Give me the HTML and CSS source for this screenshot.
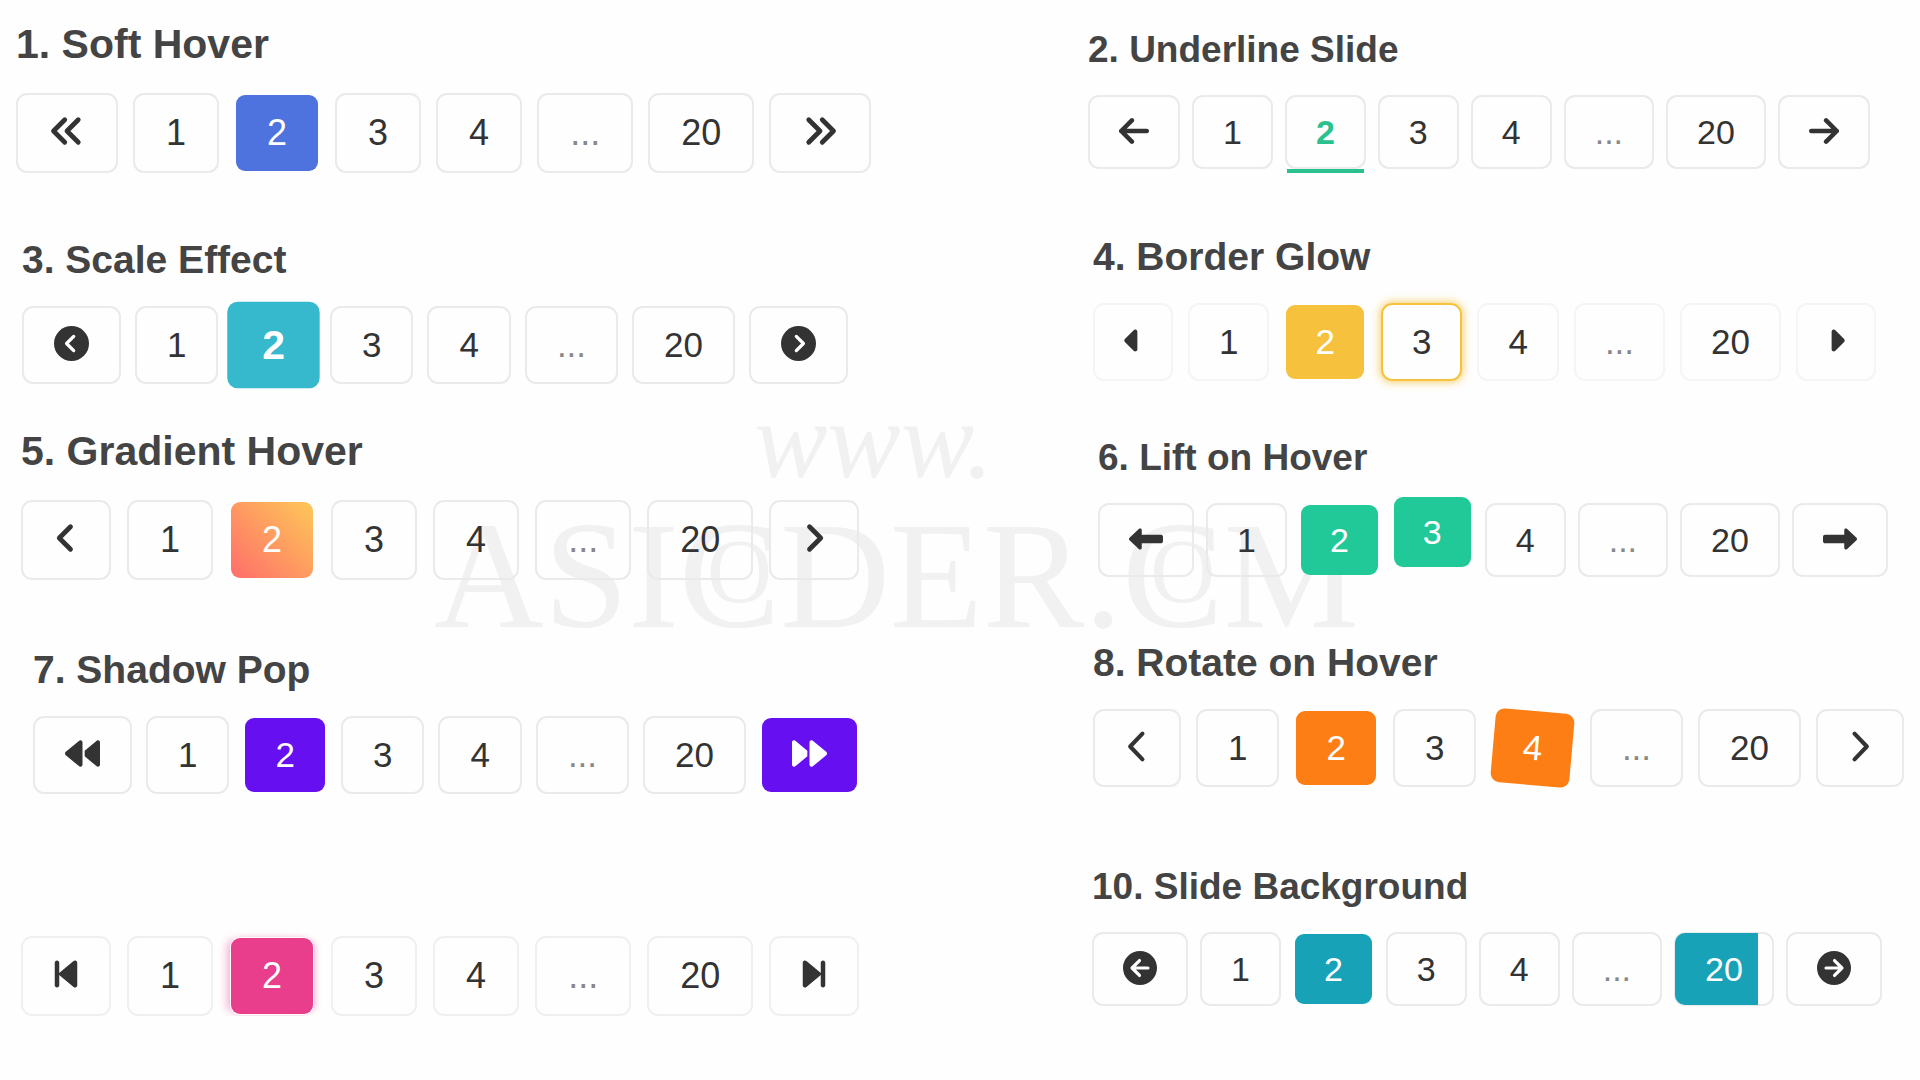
FILE: index.html
```
<!DOCTYPE html>
<html lang="en">
<head>
    <meta charset="UTF-8">
    <meta name="viewport" content="width=device-width, initial-scale=1.0">
    <title>Pagination Hover Effects</title>
    <link rel="stylesheet" href="styles.css">
</head>
<body>
    <!-- Icon set, "next" icons are the same shapes flipped -->
    <svg class="sprite" aria-hidden="true">
        <symbol id="angles" viewBox="0 0 512 512">
            <path class="line" d="M224 96 64 256l160 160M416 96 256 256l160 160"/>
        </symbol>
        <symbol id="arrow" viewBox="0 0 448 512">
            <path class="line" d="M192 96 32 256l160 160M32 256h384"/>
        </symbol>
        <symbol id="circle-chevron" viewBox="0 0 512 512">
            <circle cx="256" cy="256" r="256"/>
            <path class="cut" d="M288 152 184 256l104 104"/>
        </symbol>
        <symbol id="caret" viewBox="0 0 256 512">
            <path d="M9.4 278.6c-12.5-12.5-12.5-32.8 0-45.3l128-128c9.2-9.2 22.9-11.9 34.9-6.9s19.8 16.6 19.8 29.6v256c0 12.9-7.8 24.6-19.8 29.6s-25.7 2.2-34.9-6.9l-128-128z"/>
        </symbol>
        <symbol id="angle" viewBox="0 0 320 512">
            <path class="line" d="M224 96 64 256l160 160"/>
        </symbol>
        <symbol id="long-arrow" viewBox="0 0 512 512">
            <path d="M177.5 414c-8.8 3.8-19 2-26-4.6l-144-136C2.7 268.9 0 262.6 0 256s2.7-12.9 7.5-17.4l144-136c7-6.6 17.2-8.4 26-4.6s14.5 12.5 14.5 22v72h288c17.7 0 32 14.3 32 32v64c0 17.7-14.3 32-32 32H192v72c0 9.6-5.7 18.2-14.5 22z"/>
        </symbol>
        <symbol id="backward" viewBox="0 0 512 512">
            <path d="M459.5 440.6c9.5 7.9 22.8 9.7 34.1 4.4s18.4-16.6 18.4-29V96c0-12.4-7.2-23.7-18.4-29s-24.5-3.6-34.1 4.4L288 214.3v83.4l171.5 142.9zM256 352V96c0-12.4-7.2-23.7-18.4-29s-24.5-3.6-34.1 4.4l-192 160C4.2 237.5 0 246.5 0 256s4.2 18.5 11.5 24.6l192 160c9.5 7.9 22.8 9.7 34.1 4.4s18.4-16.6 18.4-29v-64z"/>
        </symbol>
        <symbol id="chevron" viewBox="0 0 320 512">
            <path class="line thin" d="M240 68 60 256l180 188"/>
        </symbol>
        <symbol id="step" viewBox="0 0 320 512">
            <path d="M267.5 440.6c9.5 7.9 22.8 9.7 34.1 4.4s18.4-16.6 18.4-29V96c0-12.4-7.2-23.7-18.4-29s-24.5-3.6-34.1 4.4l-192 160L64 241V96c0-17.7-14.3-32-32-32S0 78.3 0 96v320c0 17.7 14.3 32 32 32s32-14.3 32-32V271l11.5 9.6 192 160z"/>
        </symbol>
        <symbol id="circle-arrow" viewBox="0 0 512 512">
            <circle cx="256" cy="256" r="256"/>
            <path class="cut" d="M248 144 136 256l112 112M136 256h240"/>
        </symbol>
    </svg>

    <div class="watermark" aria-hidden="true">
        <div class="watermark-top">www.</div>
        <div class="watermark-name">ASI<span class="nest">C<span class="inner">O</span></span>DER.<span class="nest">C<span class="inner">O</span></span>M</div>
    </div>

    <main class="demos">
        <div class="column">
            <section class="demo large soft-hover">
                <h2>1. Soft Hover</h2>
                <nav class="pagination" aria-label="Soft Hover">
                    <a href="#" aria-label="Previous"><svg class="icon"><use href="#angles"/></svg></a>
                    <a href="#">1</a>
                    <a href="#" class="active">2</a>
                    <a href="#">3</a>
                    <a href="#">4</a>
                    <span class="dots">...</span>
                    <a href="#">20</a>
                    <a href="#" aria-label="Next"><svg class="icon flip"><use href="#angles"/></svg></a>
                </nav>
            </section>

            <section class="demo medium scale-effect">
                <h2>3. Scale Effect</h2>
                <nav class="pagination" aria-label="Scale Effect">
                    <a href="#" aria-label="Previous"><svg class="icon"><use href="#circle-chevron"/></svg></a>
                    <a href="#">1</a>
                    <a href="#" class="active">2</a>
                    <a href="#">3</a>
                    <a href="#">4</a>
                    <span class="dots">...</span>
                    <a href="#">20</a>
                    <a href="#" aria-label="Next"><svg class="icon flip"><use href="#circle-chevron"/></svg></a>
                </nav>
            </section>

            <section class="demo large gradient-hover">
                <h2>5. Gradient Hover</h2>
                <nav class="pagination" aria-label="Gradient Hover">
                    <a href="#" aria-label="Previous"><svg class="icon narrow"><use href="#angle"/></svg></a>
                    <a href="#">1</a>
                    <a href="#" class="active">2</a>
                    <a href="#">3</a>
                    <a href="#">4</a>
                    <span class="dots">...</span>
                    <a href="#">20</a>
                    <a href="#" aria-label="Next"><svg class="icon narrow flip"><use href="#angle"/></svg></a>
                </nav>
            </section>

            <section class="demo medium shadow-pop">
                <h2>7. Shadow Pop</h2>
                <nav class="pagination" aria-label="Shadow Pop">
                    <a href="#" aria-label="Previous"><svg class="icon"><use href="#backward"/></svg></a>
                    <a href="#">1</a>
                    <a href="#" class="active">2</a>
                    <a href="#">3</a>
                    <a href="#">4</a>
                    <span class="dots">...</span>
                    <a href="#">20</a>
                    <a href="#" class="hovered" aria-label="Next"><svg class="icon flip"><use href="#backward"/></svg></a>
                </nav>
            </section>

            <section class="demo large pulse">
                <nav class="pagination" aria-label="Pulse">
                    <a href="#" aria-label="Previous"><svg class="icon narrow"><use href="#step"/></svg></a>
                    <a href="#">1</a>
                    <a href="#" class="active">2</a>
                    <a href="#">3</a>
                    <a href="#">4</a>
                    <span class="dots">...</span>
                    <a href="#">20</a>
                    <a href="#" aria-label="Next"><svg class="icon narrow flip"><use href="#step"/></svg></a>
                </nav>
            </section>
        </div>

        <div class="column">
            <section class="demo small underline-slide">
                <h2>2. Underline Slide</h2>
                <nav class="pagination" aria-label="Underline Slide">
                    <a href="#" aria-label="Previous"><svg class="icon arrow"><use href="#arrow"/></svg></a>
                    <a href="#">1</a>
                    <a href="#" class="active">2</a>
                    <a href="#">3</a>
                    <a href="#">4</a>
                    <span class="dots">...</span>
                    <a href="#">20</a>
                    <a href="#" aria-label="Next"><svg class="icon arrow flip"><use href="#arrow"/></svg></a>
                </nav>
            </section>

            <section class="demo medium border-glow">
                <h2>4. Border Glow</h2>
                <nav class="pagination" aria-label="Border Glow">
                    <a href="#" aria-label="Previous"><svg class="icon caret"><use href="#caret"/></svg></a>
                    <a href="#">1</a>
                    <a href="#" class="active">2</a>
                    <a href="#" class="hovered">3</a>
                    <a href="#">4</a>
                    <span class="dots">...</span>
                    <a href="#">20</a>
                    <a href="#" aria-label="Next"><svg class="icon caret flip"><use href="#caret"/></svg></a>
                </nav>
            </section>

            <section class="demo small lift-hover">
                <h2>6. Lift on Hover</h2>
                <nav class="pagination" aria-label="Lift on Hover">
                    <a href="#" aria-label="Previous"><svg class="icon"><use href="#long-arrow"/></svg></a>
                    <a href="#">1</a>
                    <a href="#" class="active">2</a>
                    <a href="#" class="hovered">3</a>
                    <a href="#">4</a>
                    <span class="dots">...</span>
                    <a href="#">20</a>
                    <a href="#" aria-label="Next"><svg class="icon flip"><use href="#long-arrow"/></svg></a>
                </nav>
            </section>

            <section class="demo medium rotate-hover">
                <h2>8. Rotate on Hover</h2>
                <nav class="pagination" aria-label="Rotate on Hover">
                    <a href="#" aria-label="Previous"><svg class="icon narrow"><use href="#chevron"/></svg></a>
                    <a href="#">1</a>
                    <a href="#" class="active">2</a>
                    <a href="#">3</a>
                    <a href="#" class="hovered">4</a>
                    <span class="dots">...</span>
                    <a href="#">20</a>
                    <a href="#" aria-label="Next"><svg class="icon narrow flip"><use href="#chevron"/></svg></a>
                </nav>
            </section>

            <section class="demo small slide-background">
                <h2>10. Slide Background</h2>
                <nav class="pagination" aria-label="Slide Background">
                    <a href="#" aria-label="Previous"><svg class="icon"><use href="#circle-arrow"/></svg></a>
                    <a href="#">1</a>
                    <a href="#" class="active">2</a>
                    <a href="#">3</a>
                    <a href="#">4</a>
                    <span class="dots">...</span>
                    <a href="#" class="hovered">20</a>
                    <a href="#" aria-label="Next"><svg class="icon flip"><use href="#circle-arrow"/></svg></a>
                </nav>
            </section>
        </div>
    </main>
</body>
</html>
```
FILE: styles.css
```
* {
    box-sizing: border-box;
}

body {
    margin: 0;
    background: #fefefe;
    color: #333;
    font-family: "Liberation Sans", Arial, sans-serif;
}

.sprite {
    display: none;
}

/* Layout */
.demos {
    display: grid;
    grid-template-columns: 17fr 13fr;
}

.column {
    display: flex;
    flex-direction: column;
}

h2 {
    margin: 0 0 22px;
    color: #444;
    font-size: 39px;
    line-height: 48px;
    white-space: nowrap;
}

/* Pagination */
.pagination {
    display: flex;
    gap: 15px;
    font-size: 35px;
    line-height: 42px;
}

.pagination a,
.dots {
    position: relative;
    padding: 16px 30px;
    border: 2px solid #e9eaec;
    border-radius: 11px;
    color: #333;
    text-decoration: none;
}

.pagination .dots {
    color: #888;
}

.pagination .active,
.pagination .hovered {
    border-color: transparent;
    background-clip: padding-box;
    color: #fff;
}

/* Sizes */
.large h2 {
    margin-bottom: 25px;
    font-size: 41px;
}

.large .pagination {
    gap: 16px;
    font-size: 36px;
}

.large a,
.large .dots {
    padding: 17px 31px;
}

.small h2 {
    margin-bottom: 21px;
    font-size: 37px;
}

.small .pagination {
    gap: 12px;
    font-size: 34px;
}

.small a,
.small .dots {
    padding: 14px 29px;
}

/* Icons */
.icon {
    width: 1em;
    height: 1em;
    fill: currentColor;
    vertical-align: -4px;
}

.icon.arrow {
    width: 30px;
}

.icon.narrow {
    width: 24px;
}

.icon.caret {
    width: 18px;
}

.flip {
    transform: scaleX(-1);
}

.line {
    fill: none;
    stroke: currentColor;
    stroke-width: 68;
    stroke-linecap: round;
    stroke-linejoin: round;
}

.line.thin {
    stroke-width: 60;
}

.cut {
    fill: none;
    stroke: #fff;
    stroke-width: 48;
    stroke-linecap: round;
    stroke-linejoin: round;
}

/* 1. Soft Hover */
.soft-hover {
    margin: 20px 0 0 16px;
}

.soft-hover .pagination {
    gap: 15px;
}

.soft-hover .active {
    background-color: #4e73df;
}

/* 2. Underline Slide */
.underline-slide {
    margin-top: 26px;
}

.underline-slide .active {
    border-color: #e9eaec;
    color: #2bc18f;
    font-weight: bold;
}

.underline-slide .active::after {
    content: "";
    position: absolute;
    left: 0;
    right: 0;
    bottom: -6px;
    height: 4px;
    background: #2bc18f;
}

/* 3. Scale Effect */
.scale-effect {
    margin: 63px 0 0 22px;
}

.scale-effect .active {
    background-color: #36b9cc;
    font-weight: bold;
    transform: scale(1.17);
}

/* 4. Border Glow */
.border-glow {
    margin: 64px 0 0 5px;
}

.border-glow a,
.border-glow .dots {
    border-color: #f5f5f5;
    padding: 16px 29px;
}

.border-glow .active {
    background-color: #f6c23e;
}

.border-glow .hovered {
    border-color: #f6c23e;
    color: #333;
    box-shadow: 0 0 8px 1px rgba(246, 194, 62, 0.8);
}

/* 5. Gradient Hover */
.gradient-hover {
    margin: 43px 0 0 21px;
}

.gradient-hover .active {
    background-image: linear-gradient(45deg, #ff6b6b, #feca57);
    background-origin: border-box;
}

/* 6. Lift on Hover */
.lift-hover {
    margin: 53px 0 0 10px;
}

.lift-hover .active,
.lift-hover .hovered {
    background-color: #20c997;
}

.lift-hover .hovered {
    transform: translateY(-8px);
}

/* 7. Shadow Pop */
.shadow-pop {
    margin: 66px 0 0 33px;
}

.shadow-pop .pagination,
.scale-effect .pagination {
    gap: 14px;
}

.shadow-pop .active,
.shadow-pop .hovered {
    background-color: #6610f2;
}

/* 8. Rotate on Hover */
.rotate-hover {
    margin: 62px 0 0 5px;
}

.rotate-hover .active,
.rotate-hover .hovered {
    background-color: #fd7e14;
}

.rotate-hover .hovered {
    transform: rotate(5deg);
}

/* 9. Pulse */
.pulse {
    margin: 142px 0 0 21px;
}

.pulse a,
.pulse .dots {
    border-color: #f0f0f0;
}

.pulse .active {
    background-color: #e83e8c;
    box-shadow: -6px 0 8px -4px rgba(232, 62, 140, 0.4), 4px 0 6px -4px rgba(232, 62, 140, 0.4);
}

/* 10. Slide Background */
.slide-background {
    margin: 76px 0 0 4px;
}

.slide-background .active {
    background-color: #17a2b8;
}

.slide-background .hovered {
    z-index: 0;
    border-color: #e9eaec;
}

.slide-background .hovered::before {
    content: "";
    position: absolute;
    inset: -1px 14px -1px -1px;
    z-index: -1;
    border-radius: 10px 0 0 10px;
    background: #17a2b8;
}

/* Watermark behind the demos */
.watermark {
    position: absolute;
    top: 380px;
    left: 434px;
    z-index: -1;
    color: #f1f1f1;
    font-family: "Liberation Serif", serif;
    white-space: nowrap;
}

.watermark-top {
    padding-left: 320px;
    font-size: 110px;
    font-style: italic;
    line-height: 120px;
}

.watermark-name {
    font-size: 152px;
    line-height: 152px;
}

.nest {
    position: relative;
}

.inner {
    position: absolute;
    top: 30px;
    left: 28px;
    font-size: 90px;
    line-height: 100px;
}
```
